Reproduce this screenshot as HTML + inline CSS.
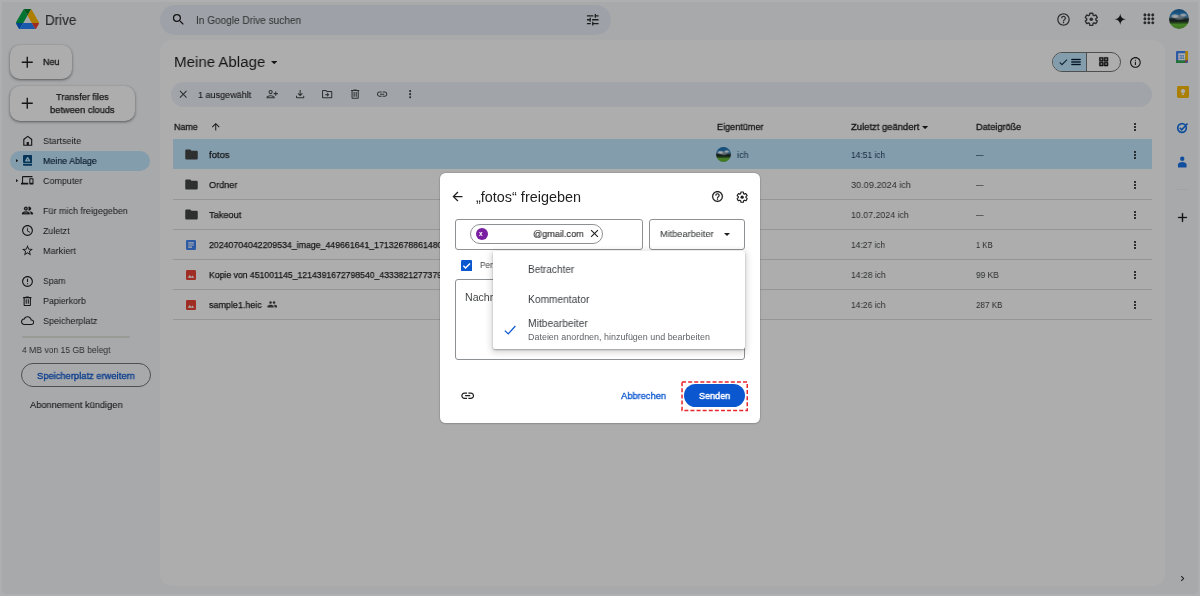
<!DOCTYPE html>
<html lang="de"><head><meta charset="utf-8"><title>Meine Ablage – Google Drive</title>
<style>
*{box-sizing:border-box;margin:0;padding:0}
html,body{width:1200px;height:596px;overflow:hidden}
body{font-family:"Liberation Sans",sans-serif;background:#f8fafd;color:#1f1f1f;position:relative}
.abs{position:absolute}
svg{display:block}
#page,#scrim,#frame{position:absolute;left:0;top:0;width:1200px;height:596px}
#page{background:#f8fafd;overflow:hidden}
#scrim{background:rgba(0,0,0,.32)}
#frame{left:2px;top:2px;width:1196px;height:592px;box-shadow:0 0 0 6px rgba(255,255,255,.075);border-radius:0 0 4px 4px}
.t{position:absolute;white-space:nowrap;line-height:1;transform-origin:0 50%;will-change:transform}
#search{position:absolute;left:160px;top:4.5px;width:451px;height:30px;border-radius:15px;background:#e9eef6}
#main{position:absolute;left:160px;top:39.6px;width:1004.8px;height:546.6px;border-radius:12px;background:#fff}
#toolbar{position:absolute;left:171px;top:82px;width:981.3px;height:25px;border-radius:12.5px;background:#edf2fa}
.btn{position:absolute;background:#fff;border-radius:10px;box-shadow:0 1px 2px rgba(0,0,0,.3),0 1px 3px 1px rgba(0,0,0,.15)}
#dlg{position:absolute;left:439.8px;top:173.2px;width:320.3px;height:250.3px;border-radius:5.500px;background:#fff;box-shadow:0 0 1.500px rgba(0,0,0,.45),0 1px 2px rgba(0,0,0,.12)}
.box{position:absolute;border:1px solid #8e9194;border-radius:3px}
#menu{position:absolute;left:492.5px;top:251.3px;width:252.3px;height:97.5px;background:#fff;border-radius:2px;box-shadow:0 1px 2px rgba(0,0,0,.3),0 2px 6px 2px rgba(0,0,0,.15)}
</style></head><body>
<div id="page">
<svg class="abs" style="left:15.9px;top:8.700px" width="23" height="20.600" viewBox="0 0 87.3 78">
<path d="m6.600 66.850 3.850 6.650c.8 1.400 1.950 2.500 3.300 3.300l13.750-23.800h-27.500c0 1.550.4 3.100 1.200 4.500z" fill="#0066da"/>
<path d="m43.650 25-13.750-23.800c-1.350.8-2.500 1.900-3.300 3.300l-25.400 44a9.060 9.060 0 0 0 -1.200 4.500h27.500z" fill="#00ac47"/>
<path d="m73.550 76.800c1.350-.8 2.500-1.900 3.300-3.300l1.600-2.750 7.650-13.250c.8-1.400 1.200-2.950 1.200-4.500h-27.502l5.852 11.500z" fill="#ea4335"/>
<path d="m43.650 25 13.750-23.800c-1.350-.8-2.900-1.200-4.500-1.200h-18.500c-1.600 0-3.150.45-4.500 1.200z" fill="#00832d"/>
<path d="m59.800 53h-32.300l-13.750 23.800c1.350.8 2.900 1.200 4.500 1.200h50.800c1.600 0 3.150-.45 4.500-1.200z" fill="#2684fc"/>
<path d="m73.400 26.500-12.700-22c-.8-1.400-1.950-2.500-3.300-3.300l-13.750 23.800 16.150 28h27.450c0-1.550-.4-3.100-1.200-4.500z" fill="#ffba00"/>
</svg>
<div id="search"></div>
<svg class="abs" style="left:171.10px;top:12.20px" width="15" height="15" viewBox="0 0 24 24"><path fill="#1f1f1f" d="M15.500 14h-.79l-.28-.27A6.470 6.470 0 0 0 16 9.500 6.500 6.500 0 1 0 9.500 16c1.610 0 3.090-.59 4.230-1.570l.27.28v.79l5 4.990L20.490 19l-4.990-5zm-6 0C7.010 14 5 11.990 5 9.500S7.010 5 9.500 5 14 7.010 14 9.500 11.990 14 9.500 14z"/></svg>
<svg class="abs" style="left:585.45px;top:11.85px" width="15.5" height="15.5" viewBox="0 0 24 24"><path fill="#2a2c2b" d="M3 17v2h6v-2H3zM3 5v2h10V5H3zm10 16v-2h8v-2h-8v-2h-2v6h2zM7 9v2H3v2h4v2h2V9H7zm14 4v-2H11v2h10zm-6-4h2V7h4V5h-4V3h-2v6z"/></svg>
<svg class="abs" style="left:1056.10px;top:11.80px" width="15" height="15" viewBox="0 0 24 24"><path fill="#444746" d="M11 18h2v-2h-2v2zm1-16C6.480 2 2 6.480 2 12s4.480 10 10 10 10-4.480 10-10S17.520 2 12 2zm0 18c-4.410 0-8-3.590-8-8s3.590-8 8-8 8 3.590 8 8-3.590 8-8 8zm0-14c-2.210 0-4 1.790-4 4h2c0-1.100.9-2 2-2s2 .9 2 2c0 2-3 1.750-3 5h2c0-2.250 3-2.500 3-5 0-2.210-1.790-4-4-4z"/></svg>
<svg class="abs" style="left:1083.70px;top:12.10px" width="14.6" height="14.6" viewBox="0 0 24 24"><path d="M19.430 12.980c.04-.32.070-.64.070-.98s-.03-.66-.07-.98l2.110-1.650c.19-.15.240-.42.120-.64l-2-3.460c-.12-.22-.39-.3-.61-.22l-2.490 1c-.52-.4-1.080-.73-1.690-.98l-.38-2.650C14.460 2.180 14.250 2 14 2h-4c-.25 0-.46.180-.49.420l-.38 2.650c-.61.250-1.170.59-1.690.98l-2.490-1c-.23-.09-.49 0-.61.220l-2 3.460c-.13.220-.07.490.12.640l2.110 1.650c-.04.320-.07.650-.07.980s.03.660.07.980l-2.110 1.650c-.19.150-.24.420-.12.640l2 3.460c.12.220.39.300.61.220l2.490-1c.52.400 1.080.73 1.690.98l.38 2.650c.03.240.24.420.49.420h4c.25 0 .46-.18.490-.42l.38-2.650c.61-.25 1.170-.59 1.690-.98l2.490 1c.23.090.49 0 .61-.22l2-3.460c.12-.22.070-.49-.12-.64l-2.110-1.650z" fill="none" stroke="#444746" stroke-width="2.3" stroke-linejoin="round"/><circle cx="12" cy="12" r="3.0" fill="#444746"/></svg>
<svg class="abs" style="left:1114.45px;top:12.85px" width="12.5" height="12.5" viewBox="0 0 24 24"><path fill="#1f1f1f" d="M12 1 C12.800 8 16 11.200 23 12 C16 12.800 12.800 16 12 23 C11.200 16 8 12.800 1 12 C8 11.200 11.200 8 12 1z"/></svg>
<svg class="abs" style="left:1140.95px;top:11.45px" width="15.7" height="15.7" viewBox="0 0 24 24"><path fill="#3a3c3b" d="M6 8c1.100 0 2-.9 2-2s-.9-2-2-2-2 .9-2 2 .9 2 2 2zm6 12c1.100 0 2-.9 2-2s-.9-2-2-2-2 .9-2 2 .9 2 2 2zm-6 0c1.100 0 2-.9 2-2s-.9-2-2-2-2 .9-2 2 .9 2 2 2zm0-6c1.100 0 2-.9 2-2s-.9-2-2-2-2 .9-2 2 .9 2 2 2zm6 0c1.100 0 2-.9 2-2s-.9-2-2-2-2 .9-2 2 .9 2 2 2zm4-8c0 1.100.9 2 2 2s2-.9 2-2-.9-2-2-2-2 .9-2 2zm-4 2c1.100 0 2-.9 2-2s-.9-2-2-2-2 .9-2 2 .9 2 2 2zm6 6c1.100 0 2-.9 2-2s-.9-2-2-2-2 .9-2 2 .9 2 2 2zm0 6c1.100 0 2-.9 2-2s-.9-2-2-2-2 .9-2 2 .9 2 2 2z" stroke="#3a3c3b" stroke-width="0.5" stroke-linejoin="round"/></svg>
<div class="abs" style="left:1168.6px;top:9.100px;width:20.400px;height:20.400px;border-radius:50%;background:radial-gradient(ellipse 22% 12% at 30% 36%,#fff 0%,rgba(255,255,255,.7) 60%,rgba(255,255,255,0) 100%),radial-gradient(ellipse 20% 10% at 72% 30%,#fff 0%,rgba(255,255,255,.6) 60%,rgba(255,255,255,0) 100%),radial-gradient(ellipse 30% 16% at 52% 42%,#9aa7b4 0%,rgba(154,167,180,.6) 60%,rgba(154,167,180,0) 100%),linear-gradient(180deg,#1d67a2 0%,#2c86c8 28%,#5a8fb5 40%,#2a3c3c 50%,#1c2b25 60%,#35632a 68%,#67bf3b 78%,#5aa832 100%)"></div>
<div class="btn" style="left:9.8px;top:44.700px;width:62.600px;height:34.300px"></div>
<svg class="abs" style="left:19.35px;top:53.75px" width="16.5" height="16.5" viewBox="0 0 24 24"><path fill="#1f1f1f" d="M20 13h-7v7h-2v-7H4v-2h7V4h2v7h7v2z"/></svg>
<div class="btn" style="left:9.8px;top:85.700px;width:125.400px;height:34.900px"></div>
<svg class="abs" style="left:19.35px;top:94.95px" width="16.5" height="16.5" viewBox="0 0 24 24"><path fill="#1f1f1f" d="M20 13h-7v7h-2v-7H4v-2h7V4h2v7h7v2z"/></svg>
<div class="abs" style="left:10.100px;top:150.800px;width:139.800px;height:20px;border-radius:10px;background:#c2e7ff"></div>
<svg class="abs" style="left:20.75px;top:133.55px" width="13.5" height="13.5" viewBox="0 0 24 24"><path fill="#1f1f1f" d="M12 3 4 9v12h16V9l-8-6zm6 16H6v-9l6-4.500 6 4.500v9zm-8-5h4v5h-4z"/></svg>
<svg class="abs" style="left:22.800px;top:155.200px" width="9.300" height="10.700" viewBox="0 0 9.3 10.7"><rect width="9.300" height="7.900" rx="1" fill="#0a4f80"/><path d="M0 8.700h9.300v1a1 1 0 0 1-1 1H1a1 1 0 0 1-1-1z" fill="#0a4f80"/><path d="M4.650 2.700l1.900 3.200h-3.800z" fill="#c2e7ff" stroke="#c2e7ff" stroke-width="1.300" stroke-linejoin="round"/><path d="M4.650 3.900l.75 1.300h-1.500z" fill="#0a4f80"/></svg>
<svg class="abs" style="left:21.35px;top:174.45px" width="12.5" height="12.5" viewBox="0 0 24 24"><path fill="#1f1f1f" d="M4 6h18V4H4c-1.100 0-2 .9-2 2v11H0v3h14v-3H4V6zm19 2h-6c-.55 0-1 .45-1 1v10c0 .55.45 1 1 1h6c.55 0 1-.45 1-1V9c0-.55-.45-1-1-1zm-1 9h-4v-7h4v7z"/></svg>
<svg class="abs" style="left:21.20px;top:204.10px" width="13" height="13" viewBox="0 0 24 24"><path fill="#1f1f1f" d="M9 13.750c-2.340 0-7 1.170-7 3.500V19h14v-1.750c0-2.330-4.660-3.500-7-3.500zM4.340 17c.84-.58 2.870-1.250 4.660-1.250s3.820.67 4.660 1.250H4.340zM9 12c1.930 0 3.500-1.570 3.500-3.500S10.930 5 9 5 5.500 6.570 5.500 8.500 7.070 12 9 12zm0-5c.83 0 1.500.67 1.500 1.500S9.830 10 9 10s-1.500-.67-1.500-1.500S8.170 7 9 7zm7.040 6.810c1.160.84 1.960 1.960 1.960 3.440V19h4v-1.750c0-2.020-3.500-3.170-5.960-3.440zM15 12c1.930 0 3.500-1.570 3.500-3.500S16.930 5 15 5c-.54 0-1.040.13-1.500.35.630.89 1 1.980 1 3.150s-.37 2.260-1 3.150c.46.220.96.350 1.500.350z" stroke="#1f1f1f" stroke-width="0.5" stroke-linejoin="round"/></svg>
<svg class="abs" style="left:21.10px;top:224.30px" width="13" height="13" viewBox="0 0 24 24"><path fill="#1f1f1f" d="M11.990 2C6.470 2 2 6.480 2 12s4.470 10 9.990 10C17.520 22 22 17.520 22 12S17.520 2 11.990 2zM12 20c-4.420 0-8-3.580-8-8s3.580-8 8-8 8 3.580 8 8-3.580 8-8 8zm.5-13H11v6l5.250 3.150.75-1.230-4.500-2.670z"/></svg>
<svg class="abs" style="left:21.10px;top:244.30px" width="13" height="13" viewBox="0 0 24 24"><path fill="#1f1f1f" d="m22 9.240-7.190-.62L12 2 9.190 8.630 2 9.240l5.460 4.730L5.820 21 12 17.270 18.180 21l-1.630-7.030L22 9.240zM12 15.400l-3.760 2.270 1-4.280-3.320-2.880 4.380-.38L12 6.100l1.710 4.040 4.380.38-3.320 2.880 1 4.280L12 15.400z"/></svg>
<svg class="abs" style="left:20.90px;top:274.60px" width="13" height="13" viewBox="0 0 24 24"><path fill="#1f1f1f" d="M11 15h2v2h-2v-2zm0-8h2v6h-2V7zm.99-5C6.470 2 2 6.480 2 12s4.470 10 9.990 10C17.520 22 22 17.520 22 12S17.520 2 11.990 2zM12 20c-4.420 0-8-3.580-8-8s3.580-8 8-8 8 3.580 8 8-3.580 8-8 8z"/></svg>
<svg class="abs" style="left:21.15px;top:294.55px" width="12.5" height="12.5" viewBox="0 0 24 24"><path fill="#1f1f1f" d="M15 4V3H9v1H4v2h1v13c0 1.100.9 2 2 2h10c1.100 0 2-.9 2-2V6h1V4h-5zm2 15H7V6h10v13zM9 8h2v9H9zm4 0h2v9h-2z"/></svg>
<svg class="abs" style="left:21.00px;top:314.40px" width="13.2" height="13.2" viewBox="0 0 24 24"><path fill="#1f1f1f" d="M19.350 10.040C18.670 6.590 15.640 4 12 4 9.110 4 6.600 5.640 5.350 8.040 2.340 8.360 0 10.910 0 14c0 3.310 2.690 6 6 6h13c2.760 0 5-2.240 5-5 0-2.640-2.050-4.780-4.650-4.960zM19 18H6c-2.210 0-4-1.790-4-4 0-2.050 1.530-3.760 3.560-3.970l1.070-.11.500-.95C8.080 7.140 9.940 6 12 6c2.620 0 4.880 1.860 5.390 4.430l.3 1.500 1.530.11c1.560.100 2.780 1.410 2.780 2.960 0 1.650-1.350 3-3 3z"/></svg>
<svg class="abs" style="left:16.300px;top:158.9px" width="2.200" height="3.400" viewBox="0 0 3 5"><path d="M0 0l3 2.500L0 5z" fill="#1f1f1f"/></svg>
<svg class="abs" style="left:16.300px;top:179.1px" width="2.200" height="3.400" viewBox="0 0 3 5"><path d="M0 0l3 2.500L0 5z" fill="#1f1f1f"/></svg>
<div class="abs" style="left:21.500px;top:336.300px;width:108.700px;height:1.400px;border-radius:1px;background:#dfe3dc"></div>
<div class="abs" style="left:21px;top:363.400px;width:129.900px;height:23.300px;border-radius:12px;border:1px solid #747775"></div>
<div id="main"></div>
<svg class="abs" style="left:271px;top:60.500px" width="6.400" height="3.200" viewBox="0 0 10 5"><path d="M0 0h10L5 5z" fill="#1f1f1f"/></svg>
<div id="toolbar"></div>
<svg class="abs" style="left:176.75px;top:88.05px" width="12.5" height="12.5" viewBox="0 0 24 24"><path fill="#444746" d="M19 6.410 17.590 5 12 10.590 6.410 5 5 6.410 10.590 12 5 17.590 6.410 19 12 13.410 17.590 19 19 17.590 13.410 12z"/></svg>
<svg class="abs" style="left:266.35px;top:88.15px" width="12.3" height="12.3" viewBox="0 0 24 24"><path fill="#444746" d="M9 12c2.210 0 4-1.790 4-4s-1.790-4-4-4-4 1.790-4 4 1.790 4 4 4zm0-6c1.100 0 2 .9 2 2s-.9 2-2 2-2-.9-2-2 .9-2 2-2zm0 8c-2.670 0-8 1.340-8 4v2h16v-2c0-2.660-5.330-4-8-4zm6 4H3v-.01C3.200 17.290 6.300 16 9 16s5.800 1.290 6 2zM20 10V7h-2v3h-3v2h3v3h2v-3h3v-2z"/></svg>
<svg class="abs" style="left:293.85px;top:88.15px" width="12.3" height="12.3" viewBox="0 0 24 24"><path fill="#444746" d="M18 15v3H6v-3H4v3c0 1.100.9 2 2 2h12c1.100 0 2-.9 2-2v-3h-2zm-1-4-1.410-1.410L13 12.170V4h-2v8.170L8.410 9.590 7 11l5 5 5-5z"/></svg>
<svg class="abs" style="left:320.85px;top:88.15px" width="12.3" height="12.3" viewBox="0 0 24 24"><path fill="#444746" d="M20 6h-8l-2-2H4c-1.100 0-1.990.9-1.990 2L2 18c0 1.100.9 2 2 2h16c1.100 0 2-.9 2-2V8c0-1.100-.9-2-2-2zm0 12H4V6h5.170l2 2H20v10zm-8-1 4-4-4-4v3H8v2h4v3z"/></svg>
<svg class="abs" style="left:348.85px;top:88.15px" width="12.3" height="12.3" viewBox="0 0 24 24"><path fill="#444746" d="M15 4V3H9v1H4v2h1v13c0 1.100.9 2 2 2h10c1.100 0 2-.9 2-2V6h1V4h-5zm2 15H7V6h10v13zM9 8h2v9H9zm4 0h2v9h-2z"/></svg>
<svg class="abs" style="left:375.85px;top:88.15px" width="12.3" height="12.3" viewBox="0 0 24 24"><path fill="#444746" d="M3.900 12c0-1.710 1.390-3.100 3.100-3.100h4V7H7c-2.760 0-5 2.240-5 5s2.240 5 5 5h4v-1.900H7c-1.710 0-3.100-1.390-3.100-3.100zM8 13h8v-2H8v2zm9-6h-4v1.900h4c1.710 0 3.100 1.390 3.100 3.100s-1.390 3.100-3.100 3.100h-4V17h4c2.760 0 5-2.240 5-5s-2.240-5-5-5z"/></svg>
<svg class="abs" style="left:403.85px;top:88.15px" width="12.3" height="12.3" viewBox="0 0 24 24"><path fill="#444746" d="M12 8c1.100 0 2-.9 2-2s-.9-2-2-2-2 .9-2 2 .9 2 2 2zm0 2c-1.100 0-2 .9-2 2s.9 2 2 2 2-.9 2-2-.9-2-2-2zm0 6c-1.100 0-2 .9-2 2s.9 2 2 2 2-.9 2-2-.9-2-2-2z"/></svg>
<svg class="abs" style="left:210.25px;top:120.95px" width="11.5" height="11.5" viewBox="0 0 24 24"><path fill="#1f1f1f" d="M4 12l1.410 1.410L11 7.830V20h2V7.830l5.580 5.590L20 12l-8-8-8 8z"/></svg>
<svg class="abs" style="left:922px;top:125.700px" width="6.200" height="3.100" viewBox="0 0 10 5"><path d="M0 0h10L5 5z" fill="#1f1f1f"/></svg>
<svg class="abs" style="left:1129.40px;top:121.00px" width="12" height="12" viewBox="0 0 24 24"><path fill="#1f1f1f" d="M12 8c1.100 0 2-.9 2-2s-.9-2-2-2-2 .9-2 2 .9 2 2 2zm0 2c-1.100 0-2 .9-2 2s.9 2 2 2 2-.9 2-2-.9-2-2-2zm0 6c-1.100 0-2 .9-2 2s.9 2 2 2 2-.9 2-2-.9-2-2-2z"/></svg>
<div class="abs" style="left:1051.800px;top:51.700px;width:69px;height:20.100px;border-radius:10.050px;border:1px solid #747775;overflow:hidden"><div style="position:absolute;left:0;top:0;width:34.300px;height:19px;background:#c2e7ff;border-right:1px solid #747775"></div></div>
<svg class="abs" style="left:1057.55px;top:56.75px" width="10.5" height="10.5" viewBox="0 0 24 24"><path fill="#001d35" d="M9 16.170 4.830 12l-1.420 1.410L9 19 21 7l-1.410-1.410z" stroke="#001d35" stroke-width="0.5" stroke-linejoin="round"/></svg>
<svg class="abs" style="left:1069.60px;top:56.00px" width="12" height="12" viewBox="0 0 24 24"><path fill="#001d35" d="M3 18h18v-2H3v2zm0-5h18v-2H3v2zm0-7v2h18V6H3z" stroke="#001d35" stroke-width="0.7" stroke-linejoin="round"/></svg>
<svg class="abs" style="left:1097.50px;top:56.30px" width="11.4" height="11.4" viewBox="0 0 24 24"><path fill="#1f1f1f" d="M3 3v8h8V3H3zm6 6H5V5h4v4zm-6 4v8h8v-8H3zm6 6H5v-4h4v4zm4-16v8h8V3h-8zm6 6h-4V5h4v4zm-6 4v8h8v-8h-8zm6 6h-4v-4h4v4z" stroke="#1f1f1f" stroke-width="1.3" stroke-linejoin="round"/></svg>
<svg class="abs" style="left:1129.20px;top:55.60px" width="12.8" height="12.8" viewBox="0 0 24 24"><path fill="#1f1f1f" d="M11 7h2v2h-2zm0 4h2v6h-2zm1-9C6.480 2 2 6.480 2 12s4.480 10 10 10 10-4.480 10-10S17.520 2 12 2zm0 18c-4.410 0-8-3.590-8-8s3.590-8 8-8 8 3.590 8 8-3.590 8-8 8z"/></svg>
<div class="abs" style="left:173.250px;top:138.500px;width:979px;height:1px;background:#dedede"></div>
<div class="abs" style="left:173.250px;top:139px;width:979px;height:30px;background:#c2e7ff"></div>
<svg class="abs" style="left:183.70px;top:147.00px" width="15" height="15" viewBox="0 0 24 24"><path fill="#444746" d="M10 4H4c-1.100 0-1.990.9-1.990 2L2 18c0 1.100.9 2 2 2h16c1.100 0 2-.9 2-2V8c0-1.100-.9-2-2-2h-8l-2-2z"/></svg>
<svg class="abs" style="left:1129.40px;top:148.50px" width="12" height="12" viewBox="0 0 24 24"><path fill="#1f1f1f" d="M12 8c1.100 0 2-.9 2-2s-.9-2-2-2-2 .9-2 2 .9 2 2 2zm0 2c-1.100 0-2 .9-2 2s.9 2 2 2 2-.9 2-2-.9-2-2-2zm0 6c-1.100 0-2 .9-2 2s.9 2 2 2 2-.9 2-2-.9-2-2-2z"/></svg>
<div class="abs" style="left:173.250px;top:199px;width:979px;height:1px;background:#dedede"></div>
<svg class="abs" style="left:183.70px;top:177.00px" width="15" height="15" viewBox="0 0 24 24"><path fill="#444746" d="M10 4H4c-1.100 0-1.990.9-1.990 2L2 18c0 1.100.9 2 2 2h16c1.100 0 2-.9 2-2V8c0-1.100-.9-2-2-2h-8l-2-2z"/></svg>
<svg class="abs" style="left:1129.40px;top:178.50px" width="12" height="12" viewBox="0 0 24 24"><path fill="#1f1f1f" d="M12 8c1.100 0 2-.9 2-2s-.9-2-2-2-2 .9-2 2 .9 2 2 2zm0 2c-1.100 0-2 .9-2 2s.9 2 2 2 2-.9 2-2-.9-2-2-2zm0 6c-1.100 0-2 .9-2 2s.9 2 2 2 2-.9 2-2-.9-2-2-2z"/></svg>
<div class="abs" style="left:173.250px;top:229px;width:979px;height:1px;background:#dedede"></div>
<svg class="abs" style="left:183.70px;top:207.00px" width="15" height="15" viewBox="0 0 24 24"><path fill="#444746" d="M10 4H4c-1.100 0-1.990.9-1.990 2L2 18c0 1.100.9 2 2 2h16c1.100 0 2-.9 2-2V8c0-1.100-.9-2-2-2h-8l-2-2z"/></svg>
<svg class="abs" style="left:1129.40px;top:208.50px" width="12" height="12" viewBox="0 0 24 24"><path fill="#1f1f1f" d="M12 8c1.100 0 2-.9 2-2s-.9-2-2-2-2 .9-2 2 .9 2 2 2zm0 2c-1.100 0-2 .9-2 2s.9 2 2 2 2-.9 2-2-.9-2-2-2zm0 6c-1.100 0-2 .9-2 2s.9 2 2 2 2-.9 2-2-.9-2-2-2z"/></svg>
<div class="abs" style="left:173.250px;top:259px;width:979px;height:1px;background:#dedede"></div>
<svg class="abs" style="left:186.250px;top:239.5px" width="10" height="10" viewBox="0 0 10 10"><rect width="10" height="10" rx="1.200" fill="#4285f4"/><path d="M2.200 2.900h5.600M2.200 5h5.600M2.200 7.100h3.800" stroke="#fff" stroke-width="1.150"/></svg>
<svg class="abs" style="left:1129.40px;top:238.50px" width="12" height="12" viewBox="0 0 24 24"><path fill="#1f1f1f" d="M12 8c1.100 0 2-.9 2-2s-.9-2-2-2-2 .9-2 2 .9 2 2 2zm0 2c-1.100 0-2 .9-2 2s.9 2 2 2 2-.9 2-2-.9-2-2-2zm0 6c-1.100 0-2 .9-2 2s.9 2 2 2 2-.9 2-2-.9-2-2-2z"/></svg>
<div class="abs" style="left:173.250px;top:289px;width:979px;height:1px;background:#dedede"></div>
<svg class="abs" style="left:186.250px;top:269.5px" width="10" height="10" viewBox="0 0 10 10"><rect width="10" height="10" rx="1.200" fill="#ea4335"/><path d="M1.700 7.800l2.100-2.900 1.500 2 1.100-1.300 1.900 2.200z" fill="#fff"/></svg>
<svg class="abs" style="left:1129.40px;top:268.50px" width="12" height="12" viewBox="0 0 24 24"><path fill="#1f1f1f" d="M12 8c1.100 0 2-.9 2-2s-.9-2-2-2-2 .9-2 2 .9 2 2 2zm0 2c-1.100 0-2 .9-2 2s.9 2 2 2 2-.9 2-2-.9-2-2-2zm0 6c-1.100 0-2 .9-2 2s.9 2 2 2 2-.9 2-2-.9-2-2-2z"/></svg>
<div class="abs" style="left:173.250px;top:319px;width:979px;height:1px;background:#dedede"></div>
<svg class="abs" style="left:186.250px;top:299.5px" width="10" height="10" viewBox="0 0 10 10"><rect width="10" height="10" rx="1.200" fill="#ea4335"/><path d="M1.700 7.800l2.100-2.900 1.500 2 1.100-1.300 1.900 2.200z" fill="#fff"/></svg>
<svg class="abs" style="left:1129.40px;top:298.50px" width="12" height="12" viewBox="0 0 24 24"><path fill="#1f1f1f" d="M12 8c1.100 0 2-.9 2-2s-.9-2-2-2-2 .9-2 2 .9 2 2 2zm0 2c-1.100 0-2 .9-2 2s.9 2 2 2 2-.9 2-2-.9-2-2-2zm0 6c-1.100 0-2 .9-2 2s.9 2 2 2 2-.9 2-2-.9-2-2-2z"/></svg>
<div class="abs" style="left:716px;top:146.750px;width:15.250px;height:15.250px;border-radius:50%;background:radial-gradient(ellipse 22% 12% at 30% 36%,#fff 0%,rgba(255,255,255,.7) 60%,rgba(255,255,255,0) 100%),radial-gradient(ellipse 20% 10% at 72% 30%,#fff 0%,rgba(255,255,255,.6) 60%,rgba(255,255,255,0) 100%),radial-gradient(ellipse 30% 16% at 52% 42%,#9aa7b4 0%,rgba(154,167,180,.6) 60%,rgba(154,167,180,0) 100%),linear-gradient(180deg,#1d67a2 0%,#2c86c8 28%,#5a8fb5 40%,#2a3c3c 50%,#1c2b25 60%,#35632a 68%,#67bf3b 78%,#5aa832 100%)"></div>
<svg class="abs" style="left:266.60px;top:299.40px" width="10.6" height="10.6" viewBox="0 0 24 24"><path fill="#444746" d="M16 11c1.660 0 2.990-1.340 2.990-3S17.660 5 16 5c-1.660 0-3 1.340-3 3s1.340 3 3 3zm-8 0c1.660 0 2.990-1.340 2.990-3S9.660 5 8 5C6.340 5 5 6.340 5 8s1.340 3 3 3zm0 2c-2.330 0-7 1.170-7 3.500V19h14v-2.500c0-2.330-4.670-3.500-7-3.500zm8 0c-.29 0-.62.020-.97.050 1.160.84 1.970 1.970 1.970 3.450V19h6v-2.500c0-2.330-4.670-3.500-7-3.500z"/></svg>
<svg class="abs" style="left:1176.200px;top:50.700px" width="12" height="12" viewBox="0 0 13 13"><rect x="0" y="0" width="13" height="13" rx="1" fill="#4285f4"/><rect x="10" y="0" width="3" height="10" fill="#fbbc04"/><rect x="0" y="10" width="10" height="3" fill="#34a853"/><path d="M10 10h3l-3 3z" fill="#ea4335"/><rect x="2.500" y="2.500" width="7.500" height="7.500" fill="#fff"/><text x="6.250" y="8.200" font-family="Liberation Sans,sans-serif" font-size="5" font-weight="bold" fill="#4285f4" text-anchor="middle">31</text></svg>
<svg class="abs" style="left:1176.500px;top:86px" width="12" height="12" viewBox="0 0 13 13"><rect width="13" height="13" rx="1.500" fill="#fbbc04"/><circle cx="6.500" cy="5.600" r="2.300" fill="#fff"/><rect x="5.300" y="8.200" width="2.400" height="1.600" fill="#fff"/></svg>
<svg class="abs" style="left:1176.300px;top:120.700px" width="13" height="13" viewBox="0 0 13 13"><circle cx="6" cy="7" r="4.300" fill="none" stroke="#1a73e8" stroke-width="1.700"/><path d="M3.800 6.800l2 2L11.500 2.500" fill="none" stroke="#1a73e8" stroke-width="1.700"/></svg>
<svg class="abs" style="left:1177.300px;top:156px" width="10.500" height="11.500" viewBox="0 0 11 12"><circle cx="5.500" cy="2.800" r="2.300" fill="#1a73e8"/><path d="M1 12V9c0-1.800 2-2.800 4.500-2.800S10 7.200 10 9v3z" fill="#1a73e8"/></svg>
<div class="abs" style="left:1176px;top:189px;width:13px;height:1px;background:#eef0f2"></div>
<svg class="abs" style="left:1176.00px;top:210.90px" width="13" height="13" viewBox="0 0 24 24"><path fill="#1f1f1f" d="M20 13h-7v7h-2v-7H4v-2h7V4h2v7h7v2z" stroke="#1f1f1f" stroke-width="0.6" stroke-linejoin="round"/></svg>
<svg class="abs" style="left:1176.80px;top:573.10px" width="11" height="11" viewBox="0 0 24 24"><path fill="#1f1f1f" d="M10 6 8.590 7.410 13.170 12l-4.580 4.590L10 18l6-6z"/></svg>
<div class="t" id="t0" style="left:45.10px;top:13.00px;font-size:14px;color:#3c3f3e;-webkit-text-stroke:0.15px #3c3f3e;transform:scaleX(0.9549)">Drive</div>
<div class="t" id="t1" style="left:195.50px;top:16.00px;font-size:10.3px;color:#444746;transform:scaleX(0.9758)">In Google Drive suchen</div>
<div class="t" id="t2" style="left:42.70px;top:57.00px;font-size:9.6px;color:#1f1f1f;-webkit-text-stroke:0.3px #1f1f1f;transform:scaleX(0.9313)">Neu</div>
<div class="t" id="t3" style="left:56.30px;top:92.00px;font-size:9.6px;color:#1f1f1f;-webkit-text-stroke:0.25px #1f1f1f;transform:scaleX(0.9566)">Transfer files</div>
<div class="t" id="t4" style="left:50.20px;top:105.00px;font-size:9.6px;color:#1f1f1f;-webkit-text-stroke:0.25px #1f1f1f;transform:scaleX(0.9704)">between clouds</div>
<div class="t" id="t5" style="left:42.50px;top:136.00px;font-size:9.6px;color:#1f1f1f;transform:scaleX(0.9400)">Startseite</div>
<div class="t" id="t6" style="left:42.50px;top:156.00px;font-size:9.6px;color:#001d35;-webkit-text-stroke:0.12px #001d35;transform:scaleX(0.9253)">Meine Ablage</div>
<div class="t" id="t7" style="left:42.50px;top:176.00px;font-size:9.6px;color:#1f1f1f;transform:scaleX(0.9329)">Computer</div>
<div class="t" id="t8" style="left:42.50px;top:206.00px;font-size:9.6px;color:#1f1f1f;transform:scaleX(0.9354)">Für mich freigegeben</div>
<div class="t" id="t9" style="left:42.50px;top:226.00px;font-size:9.6px;color:#1f1f1f;transform:scaleX(0.9202)">Zuletzt</div>
<div class="t" id="t10" style="left:42.50px;top:246.00px;font-size:9.6px;color:#1f1f1f;transform:scaleX(0.9493)">Markiert</div>
<div class="t" id="t11" style="left:42.50px;top:276.00px;font-size:9.6px;color:#1f1f1f;transform:scaleX(0.8978)">Spam</div>
<div class="t" id="t12" style="left:42.50px;top:296.00px;font-size:9.6px;color:#1f1f1f;transform:scaleX(0.9244)">Papierkorb</div>
<div class="t" id="t13" style="left:42.50px;top:316.00px;font-size:9.6px;color:#1f1f1f;transform:scaleX(0.9357)">Speicherplatz</div>
<div class="t" id="t14" style="left:21.50px;top:345.00px;font-size:9.4px;color:#444746;transform:scaleX(0.9130)">4 MB von 15 GB belegt</div>
<div class="t" id="t15" style="left:37.00px;top:371.00px;font-size:9.6px;color:#0b57d0;-webkit-text-stroke:0.3px #0b57d0;transform:scaleX(0.9754)">Speicherplatz erweitern</div>
<div class="t" id="t16" style="left:29.50px;top:400.00px;font-size:9.6px;color:#1f1f1f;-webkit-text-stroke:0.1px #1f1f1f;transform:scaleX(0.9644)">Abonnement kündigen</div>
<div class="t" id="t17" style="left:173.75px;top:54.00px;font-size:15.3px;color:#1f1f1f;transform:scaleX(0.9843)">Meine Ablage</div>
<div class="t" id="t18" style="left:198.00px;top:90.00px;font-size:9.6px;color:#1f1f1f;-webkit-text-stroke:0.1px #1f1f1f;transform:scaleX(0.9417)">1 ausgewählt</div>
<div class="t" id="t19" style="left:173.75px;top:122.00px;font-size:9.6px;color:#1f1f1f;-webkit-text-stroke:0.3px #1f1f1f;transform:scaleX(0.9280)">Name</div>
<div class="t" id="t20" style="left:716.50px;top:122.00px;font-size:9.6px;color:#1f1f1f;-webkit-text-stroke:0.3px #1f1f1f;transform:scaleX(0.9478)">Eigentümer</div>
<div class="t" id="t21" style="left:850.75px;top:122.00px;font-size:9.6px;color:#1f1f1f;-webkit-text-stroke:0.3px #1f1f1f;transform:scaleX(0.9842)">Zuletzt geändert</div>
<div class="t" id="t22" style="left:975.60px;top:122.00px;font-size:9.6px;color:#1f1f1f;-webkit-text-stroke:0.3px #1f1f1f;transform:scaleX(0.9522)">Dateigröße</div>
<div class="t" id="t23" style="left:209.00px;top:150.00px;font-size:9.6px;color:#1f1f1f;-webkit-text-stroke:0.25px #1f1f1f;transform:scaleX(0.9850)">fotos</div>
<div class="t" id="t24" style="left:850.75px;top:150.00px;font-size:9.6px;color:#243f5c;transform:scaleX(0.8796)">14:51 ich</div>
<div class="t" id="t25" style="left:975.90px;top:150.00px;font-size:9.6px;color:#243f5c;transform:scaleX(0.7661)">—</div>
<div class="t" id="t26" style="left:209.00px;top:180.00px;font-size:9.6px;color:#1f1f1f;-webkit-text-stroke:0.25px #1f1f1f;transform:scaleX(0.9478)">Ordner</div>
<div class="t" id="t27" style="left:850.75px;top:180.00px;font-size:9.6px;color:#444746;transform:scaleX(0.9531)">30.09.2024 ich</div>
<div class="t" id="t28" style="left:975.90px;top:180.00px;font-size:9.6px;color:#444746;transform:scaleX(0.7661)">—</div>
<div class="t" id="t29" style="left:209.00px;top:210.00px;font-size:9.6px;color:#1f1f1f;-webkit-text-stroke:0.25px #1f1f1f;transform:scaleX(0.9596)">Takeout</div>
<div class="t" id="t30" style="left:850.75px;top:210.00px;font-size:9.6px;color:#444746;transform:scaleX(0.9189)">10.07.2024 ich</div>
<div class="t" id="t31" style="left:975.90px;top:210.00px;font-size:9.6px;color:#444746;transform:scaleX(0.7661)">—</div>
<div class="t" id="t32" style="left:209.00px;top:240.00px;font-size:9.6px;color:#1f1f1f;-webkit-text-stroke:0.25px #1f1f1f;transform:scaleX(0.9133)">20240704042209534_image_449661641_17132678861480</div>
<div class="t" id="t33" style="left:850.75px;top:240.00px;font-size:9.6px;color:#444746;transform:scaleX(0.8796)">14:27 ich</div>
<div class="t" id="t34" style="left:975.90px;top:240.00px;font-size:9.6px;color:#444746;transform:scaleX(0.7928)">1 KB</div>
<div class="t" id="t35" style="left:209.00px;top:270.00px;font-size:9.6px;color:#1f1f1f;-webkit-text-stroke:0.25px #1f1f1f;transform:scaleX(0.9029)">Kopie von 451001145_1214391672798540_4333821277379</div>
<div class="t" id="t36" style="left:850.75px;top:270.00px;font-size:9.6px;color:#444746;transform:scaleX(0.8950)">14:28 ich</div>
<div class="t" id="t37" style="left:975.90px;top:270.00px;font-size:9.6px;color:#444746;transform:scaleX(0.8722)">99 KB</div>
<div class="t" id="t38" style="left:209.00px;top:300.00px;font-size:9.6px;color:#1f1f1f;-webkit-text-stroke:0.25px #1f1f1f;transform:scaleX(0.9331)">sample1.heic</div>
<div class="t" id="t39" style="left:850.75px;top:300.00px;font-size:9.6px;color:#444746;transform:scaleX(0.8873)">14:26 ich</div>
<div class="t" id="t40" style="left:975.90px;top:300.00px;font-size:9.6px;color:#444746;transform:scaleX(0.8417)">287 KB</div>
<div class="t" id="t41" style="left:736.50px;top:150.00px;font-size:9.6px;color:#243f5c;transform:scaleX(0.9376)">ich</div>
</div>
<div id="scrim"></div>
<div id="dlg"></div>
<svg class="abs" style="left:450.10px;top:188.60px" width="15" height="15" viewBox="0 0 24 24"><path fill="#1f1f1f" d="M20 11H7.830l5.590-5.590L12 4l-8 8 8 8 1.410-1.410L7.830 13H20v-2z"/></svg>
<svg class="abs" style="left:711.25px;top:190.00px" width="13" height="13" viewBox="0 0 24 24"><path fill="#1f1f1f" d="M11 18h2v-2h-2v2zm1-16C6.480 2 2 6.480 2 12s4.480 10 10 10 10-4.480 10-10S17.520 2 12 2zm0 18c-4.410 0-8-3.590-8-8s3.590-8 8-8 8 3.590 8 8-3.590 8-8 8zm0-14c-2.210 0-4 1.790-4 4h2c0-1.100.9-2 2-2s2 .9 2 2c0 2-3 1.750-3 5h2c0-2.250 3-2.500 3-5 0-2.210-1.790-4-4-4z" stroke="#1f1f1f" stroke-width="0.35" stroke-linejoin="round"/></svg>
<svg class="abs" style="left:735.85px;top:190.55px" width="12.3" height="12.3" viewBox="0 0 24 24"><path d="M19.430 12.980c.04-.32.070-.64.070-.98s-.03-.66-.07-.98l2.110-1.650c.19-.15.240-.42.120-.64l-2-3.460c-.12-.22-.39-.3-.61-.22l-2.490 1c-.52-.4-1.080-.73-1.690-.98l-.38-2.650C14.460 2.180 14.250 2 14 2h-4c-.25 0-.46.180-.49.420l-.38 2.650c-.61.250-1.170.59-1.690.98l-2.490-1c-.23-.09-.49 0-.61.220l-2 3.460c-.13.220-.07.490.12.640l2.110 1.650c-.04.320-.07.650-.07.980s.03.660.07.980l-2.110 1.650c-.19.150-.24.420-.12.640l2 3.460c.12.220.39.300.61.220l2.490-1c.52.400 1.080.73 1.690.98l.38 2.650c.03.240.24.420.49.420h4c.25 0 .46-.18.490-.42l.38-2.650c.61-.25 1.170-.59 1.690-.98l2.490 1c.23.090.49 0 .61-.22l2-3.460c.12-.22.070-.49-.12-.64l-2.110-1.650z" fill="none" stroke="#1f1f1f" stroke-width="2.3" stroke-linejoin="round"/><circle cx="12" cy="12" r="3.2" fill="#1f1f1f"/></svg>
<div class="box" style="left:455.200px;top:218.500px;width:187.500px;height:31px"></div>
<div class="box" style="left:470px;top:224px;width:133px;height:19.900px;border-radius:10px"></div>
<div class="abs" style="left:475.600px;top:227.700px;width:12px;height:12px;border-radius:50%;background:#7b1fa2"></div>
<div class="t" style="left:479.400px;top:230px;font-size:6.500px;line-height:8px;color:#fff;font-weight:bold">x</div>
<svg class="abs" style="left:588.30px;top:227.20px" width="13" height="13" viewBox="0 0 24 24"><path fill="#1f1f1f" d="M19 6.410 17.590 5 12 10.590 6.410 5 5 6.410 10.590 12 5 17.590 6.410 19 12 13.410 17.590 19 19 17.590 13.410 12z"/></svg>
<div class="box" style="left:649.100px;top:218.500px;width:95.700px;height:31px"></div>
<svg class="abs" style="left:724px;top:232.500px" width="6" height="3" viewBox="0 0 10 5"><path d="M0 0h10L5 5z" fill="#1f1f1f"/></svg>
<svg class="abs" style="left:460.800px;top:260.200px" width="11.300" height="11.300" viewBox="0 0 12 12"><rect width="12" height="12" rx="1.500" fill="#0b57d0"/><path d="M2.500 6.200l2.300 2.300L9.600 3.600" fill="none" stroke="#fff" stroke-width="1.500"/></svg>
<div class="box" style="left:455.200px;top:279.300px;width:289.600px;height:80.500px"></div>
<div class="t" id="t42" style="left:475.50px;top:190.00px;font-size:14.3px;color:#1f1f1f;transform:scaleX(1.0086)">„fotos“ freigeben</div>
<div class="t" id="t43" style="left:532.80px;top:229.00px;font-size:9.6px;color:#1f1f1f;-webkit-text-stroke:0.12px #1f1f1f;transform:scaleX(0.9482)">@gmail.com</div>
<div class="t" id="t44" style="left:660.30px;top:229.00px;font-size:9.6px;color:#444746;-webkit-text-stroke:0.1px #444746;transform:scaleX(0.9571)">Mitbearbeiter</div>
<div class="t" id="t45" style="left:480.30px;top:261.00px;font-size:9px;color:#444746;transform:scaleX(0.9055)">Personen benachrichtigen</div>
<div class="t" id="t46" style="left:465.30px;top:292.00px;font-size:10.6px;color:#444746;transform:scaleX(0.9989)">Nachricht</div>
<div id="menu"></div>
<svg class="abs" style="left:504.300px;top:324.600px" width="12.200" height="10.200" viewBox="0 0 12 10"><path d="M.8 5.500l3.400 3.300L11.200 1" fill="none" stroke="#0b57d0" stroke-width="1.250"/></svg>
<svg class="abs" style="left:460.00px;top:387.80px" width="15.4" height="15.4" viewBox="0 0 24 24"><path fill="#1f1f1f" d="M3.900 12c0-1.710 1.390-3.100 3.100-3.100h4V7H7c-2.760 0-5 2.240-5 5s2.240 5 5 5h4v-1.900H7c-1.710 0-3.100-1.390-3.100-3.100zM8 13h8v-2H8v2zm9-6h-4v1.900h4c1.710 0 3.100 1.390 3.100 3.100s-1.390 3.100-3.100 3.100h-4V17h4c2.760 0 5-2.240 5-5s-2.240-5-5-5z"/></svg>
<div class="abs" style="left:684px;top:384px;width:60.800px;height:23.200px;border-radius:11.600px;background:#0b57d0"></div>
<svg class="abs" style="left:680px;top:379.500px" width="70" height="33" viewBox="0 0 70 33"><rect x="2.050" y="2.050" width="65.200" height="28.400" fill="none" stroke="#e8262d" stroke-width="1.500" stroke-dasharray="4 2.100"/></svg>
<div class="t" id="t47" style="left:527.70px;top:265.00px;font-size:10.4px;color:#3c4043;transform:scaleX(0.9638)">Betrachter</div>
<div class="t" id="t48" style="left:527.70px;top:295.00px;font-size:10.4px;color:#3c4043;transform:scaleX(0.9828)">Kommentator</div>
<div class="t" id="t49" style="left:527.70px;top:319.00px;font-size:10.4px;color:#3c4043;transform:scaleX(0.9861)">Mitbearbeiter</div>
<div class="t" id="t50" style="left:527.70px;top:333.00px;font-size:8.9px;color:#5f6368;transform:scaleX(1.0071)">Dateien anordnen, hinzufügen und bearbeiten</div>
<div class="t" id="t51" style="left:621.30px;top:391.00px;font-size:9.6px;color:#0b57d0;-webkit-text-stroke:0.3px #0b57d0;transform:scaleX(0.9719)">Abbrechen</div>
<div class="t" id="t52" style="left:698.70px;top:391.00px;font-size:9.6px;color:#fff;-webkit-text-stroke:0.45px #fff;transform:scaleX(0.9432)">Senden</div>
<div id="frame"></div>
</body></html>
